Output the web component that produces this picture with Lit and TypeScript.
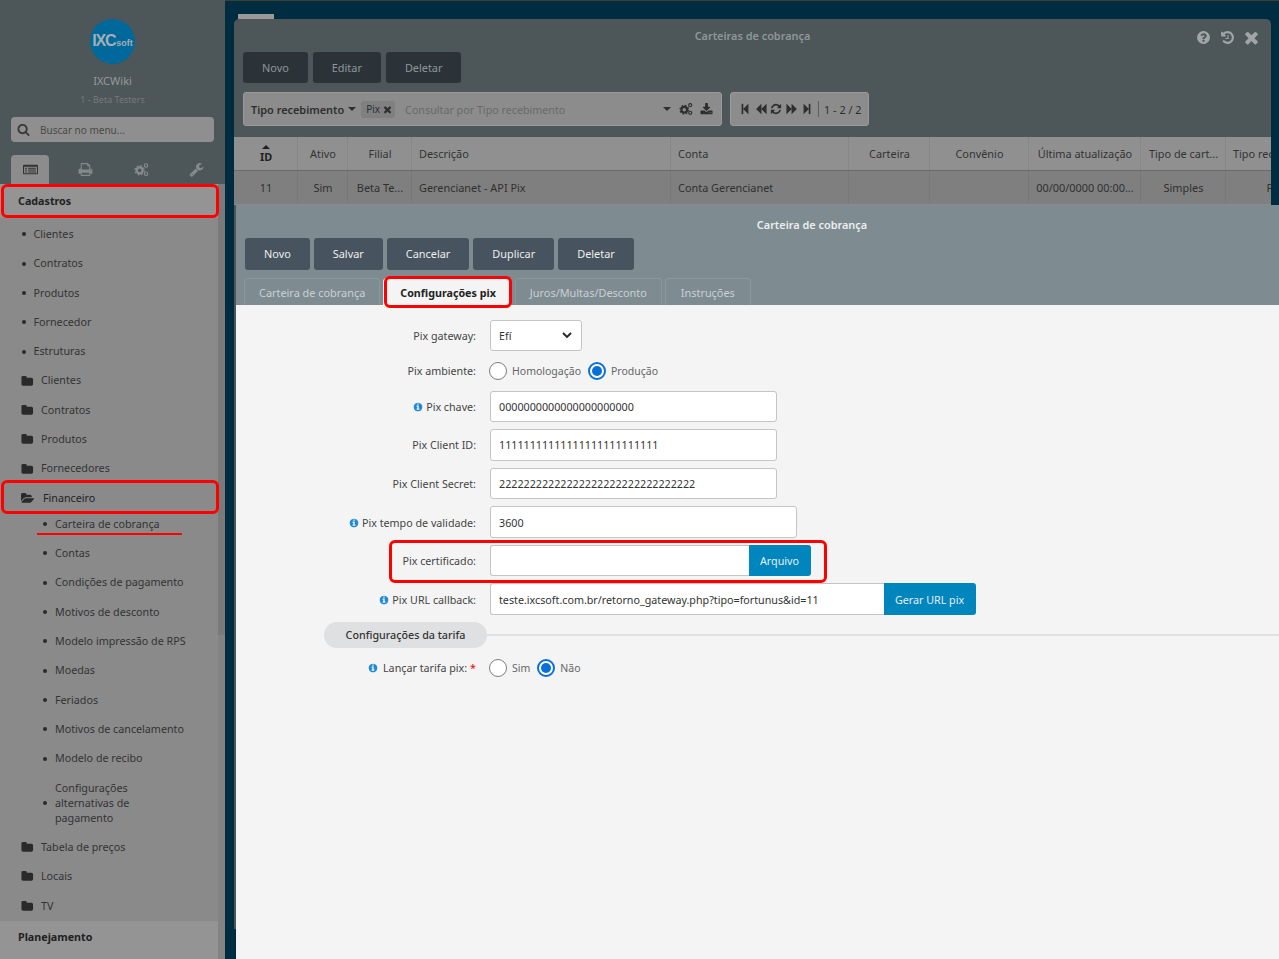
import { LitElement, html, css } from "lit";
import { customElement } from "lit/decorators.js";

const P: Record<string, string> = {
  search: "M1216 832q0-185-131.5-316.5t-316.5-131.5-316.5 131.5-131.5 316.5 131.5 316.5 316.5 131.5 316.5-131.5 131.5-316.5zm512 832q0 52-38 90t-90 38q-54 0-90-38l-343-342q-179 124-399 124-143 0-273.5-55.5t-225-150-150-225-55.5-273.5 55.5-273.5 150-225 225-150 273.5-55.5 273.5 55.5 225 150 150 225 55.5 273.5q0 220-124 399l343 343q37 37 37 90z",
  folder: "M1728 608v704q0 92-66 158t-158 66h-1216q-92 0-158-66t-66-158v-960q0-92 66-158t158-66h320q92 0 158 66t66 158v32h672q92 0 158 66t66 158z",
  open: "M1879 952q0 31-31 66l-336 396q-43 51-120.5 86.5t-143.5 35.5h-1088q-34 0-60.5-13t-26.5-43q0-31 31-66l336-396q43-51 120.5-86.5t143.5-35.5h1088q34 0 60.5 13t26.5 43zm-343-344v160h-832q-94 0-197 47.5t-164 119.5l-337 396-5 6q0-4-.5-12.5t-.5-12.5v-960q0-92 66-158t158-66h320q92 0 158 66t66 158v32h544q92 0 158 66t66 158z",
  times: "M1490 1322q0 40-28 68l-136 136q-28 28-68 28t-68-28l-294-294-294 294q-28 28-68 28t-68-28l-136-136q-28-28-28-68t28-68l294-294-294-294q-28-28-28-68t28-68l136-136q28-28 68-28t68 28l294 294 294-294q28-28 68-28t68 28l136 136q28 28 28 68t-28 68l-294 294 294 294q28 28 28 68z",
  info: "M1152 1376v-160q0-14-9-23t-23-9h-96v-512q0-14-9-23t-23-9h-320q-14 0-23 9t-9 23v160q0 14 9 23t23 9h96v320h-96q-14 0-23 9t-9 23v160q0 14 9 23t23 9h448q14 0 23-9t9-23zm-128-896v-160q0-14-9-23t-23-9h-192q-14 0-23 9t-9 23v160q0 14 9 23t23 9h192q14 0 23-9t9-23zm640 416q0 209-103 385.5t-279.5 279.5-385.5 103-385.5-103-279.5-279.5-103-385.5 103-385.5 279.5-279.5 385.5-103 385.5 103 279.5 279.5 103 385.5z",
  question: "M1024 1376v-192q0-14-9-23t-23-9h-192q-14 0-23 9t-9 23v192q0 14 9 23t23 9h192q14 0 23-9t9-23zm256-672q0-88-55.5-163t-138.5-116-170-41q-243 0-371 213-15 24 8 42l132 100q7 6 19 6 16 0 25-12 53-68 86-92 34-24 86-24 48 0 85.5 26t37.5 59q0 38-20 61t-68 45q-63 28-115.5 86.5t-52.5 125.5v36q0 14 9 23t23 9h192q14 0 23-9t9-23q0-19 21.5-49.5t54.5-49.5q32-18 49-28.5t46-35 44.5-48 28-60.5 12.5-81zm384 192q0 209-103 385.5t-279.5 279.5-385.5 103-385.5-103-279.5-279.5-103-385.5 103-385.5 279.5-279.5 385.5-103 385.5 103 279.5 279.5 103 385.5z",
  history: "M1664 896q0 156-61 298t-164 245-245 164-298 61q-172 0-327-72.5t-264-204.5q-7-10-6.5-22.5t8.5-20.5l137-138q10-9 25-9 16 2 23 12 73 95 179 147t225 52q104 0 198.5-40.5t163.5-109.5 109.5-163.5 40.5-198.5-40.5-198.5-109.5-163.5-163.5-109.5-198.5-40.5q-98 0-188 35.5t-160 101.5l137 138q31 30 14 69-17 40-59 40h-448q-26 0-45-19t-19-45v-448q0-42 40-59 39-17 69 14l130 129q107-101 244.5-156.5t284.5-55.5q156 0 298 61t245 164 164 245 61 298zm-640-288v448q0 14-9 23t-23 9h-320q-14 0-23-9t-9-23v-64q0-14 9-23t23-9h224v-352q0-14 9-23t23-9h64q14 0 23 9t9 23z",
  first: "M1363 141q19-19 32-13t13 32v1472q0 26-13 32t-32-13l-710-710q-9-9-13-19v678q0 26-19 45t-45 19h-128q-26 0-45-19t-19-45v-1408q0-26 19-45t45-19h128q26 0 45 19t19 45v678q4-10 13-19z",
  back: "M1683 141q19-19 32-13t13 32v1472q0 26-13 32t-32-13l-710-710q-9-9-13-19v710q0 26-13 32t-32-13l-710-710q-19-19-19-45t19-45l710-710q19-19 32-13t13 32v710q4-10 13-19z",
  fwd: "M109 1651q-19 19-32 13t-13-32v-1472q0-26 13-32t32 13l710 710q9 9 13 19v-710q0-26 13-32t32 13l710 710q19 19 19 45t-19 45l-710 710q-19 19-32 13t-13-32v-710q-4 10-13 19z",
  last: "M429 1651q-19 19-32 13t-13-32v-1472q0-26 13-32t32 13l710 710q9 9 13 19v-678q0-26 19-45t45-19h128q26 0 45 19t19 45v1408q0 26-19 45t-45 19h-128q-26 0-45-19t-19-45v-678q-4 10-13 19z",
  refresh: "M1639 1056q0 5-1 7-64 268-268 434.5t-478 166.5q-146 0-282.5-55t-243.5-157l-129 129q-19 19-45 19t-45-19-19-45v-448q0-26 19-45t45-19h448q26 0 45 19t19 45-19 45l-137 137q71 66 161 102t187 36q134 0 250-65t186-179q11-17 53-117 8-23 30-23h192q13 0 22.5 9.5t9.5 22.5zm25-800v448q0 26-19 45t-45 19h-448q-26 0-45-19t-19-45 19-45l138-138q-148-137-349-137-134 0-250 65t-186 179q-11 17-53 117-8 23-30 23h-199q-13 0-22.5-9.5t-9.5-22.5v-7q65-268 270-434.5t480-166.5q146 0 284 55.5t245 156.5l130-129q19-19 45-19t45 19 19 45z",
  download: "M1344 1344q0-26-19-45t-45-19-45 19-19 45 19 45 45 19 45-19 19-45zm256 0q0-26-19-45t-45-19-45 19-19 45 19 45 45 19 45-19 19-45zm128-224v320q0 40-28 68t-68 28h-1472q-40 0-68-28t-28-68v-320q0-40 28-68t68-28h465l135 136q58 56 136 56t136-56l136-136h464q40 0 68 28t28 68zm-325-569q17 41-14 70l-448 448q-18 19-45 19t-45-19l-448-448q-31-29-14-70 17-39 59-39h256v-448q0-26 19-45t45-19h256q26 0 45 19t19 45v448h256q42 0 59 39z",
  wrench: "M448 1472q0-26-19-45t-45-19-45 19-19 45 19 45 45 19 45-19 19-45zm644-420l-682 682q-37 37-90 37-52 0-91-37l-106-108q-38-36-38-90 0-53 38-91l681-681q39 98 114.5 173.5t173.5 114.5zm634-435q0 39-23 106-47 134-164.5 217.5t-258.5 83.5q-185 0-316.5-131.5t-131.5-316.5 131.5-316.5 316.5-131.5q58 0 121.5 16.5t107.5 46.5q16 11 16 28t-16 28l-293 169v224l193 107q5-3 79-48.5t135.5-81 70.5-35.5q15 0 23.5 10t8.5 25z",
  print: "M448 1536h896v-256h-896v256zm0-640h896v-384h-160q-40 0-68-28t-28-68v-160h-640v640zm1152 64q0-26-19-45t-45-19-45 19-19 45 19 45 45 19 45-19 19-45zm128 0v416q0 13-9.5 22.5t-22.5 9.5h-224v160q0 40-28 68t-68 28h-960q-40 0-68-28t-28-68v-160h-224q-13 0-22.5-9.5t-9.5-22.5v-416q0-79 56.5-135.5t135.5-56.5h64v-544q0-40 28-68t68-28h672q40 0 88 20t76 48l152 152q28 28 48 76t20 88v256h64q79 0 135.5 56.5t56.5 135.5z",
  listalt: "M128 320h1536q53 0 90.500 37.500t37.500 90.500v896q0 53-37.500 90.500t-90.500 37.500h-1536q-53 0-90.500-37.500t-37.500-90.500v-896q0-53 37.500-90.500t90.500-37.500zM128 576v768h1536v-768zM256 672h224v128h-224zM256 896h224v128h-224zM256 1120h224v128h-224zM608 672h928v128h-928zM608 896h928v128h-928zM608 1120h928v128h-928z",
};

const fa = (name: string, cls: string, w = 1792) =>
  html`<svg class="ic ${cls}" viewBox="0 0 ${w} 1792" fill="currentColor" fill-rule="evenodd"><path d=${P[name]}></path></svg>`;

const cogs = (cls: string) => html`<svg class="ic ${cls}" viewBox="0 0 20 20" fill="none" stroke="currentColor">
  <circle cx="7.500" cy="11" r="4" stroke-width="3"></circle>
  <circle cx="7.500" cy="11" r="6" stroke-width="2" stroke-dasharray="2.400 2.310"></circle>
  <circle cx="16" cy="4.500" r="2.200" stroke-width="1.600"></circle>
  <circle cx="16" cy="15.500" r="2.200" stroke-width="1.600"></circle>
</svg>`;

type Item = { t: string; k: "dot" | "folder" };
const TOP: Item[] = [
  { t: "Clientes", k: "dot" }, { t: "Contratos", k: "dot" }, { t: "Produtos", k: "dot" },
  { t: "Fornecedor", k: "dot" }, { t: "Estruturas", k: "dot" }, { t: "Clientes", k: "folder" },
  { t: "Contratos", k: "folder" }, { t: "Produtos", k: "folder" }, { t: "Fornecedores", k: "folder" },
];
const SUB = ["Carteira de cobrança", "Contas", "Condições de pagamento", "Motivos de desconto", "Modelo impressão de RPS", "Moedas", "Feriados", "Motivos de cancelamento", "Modelo de recibo"];
const AFTER = ["Tabela de preços", "Locais", "TV"];

const HEAD = [
  ["Ativo", "c"], ["Filial", "c"], ["Descrição", "l"], ["Conta", "l"], ["Carteira", "c"], ["Convênio", "c"], ["Última atualização", "c"], ["Tipo de cart...", "c"], ["Tipo recebimento", "l"],
];
const ROW = [
  ["11", "c"], ["Sim", "c"], ["Beta Te...", "c"], ["Gerencianet - API Pix", "l"], ["Conta Gerencianet", "l"], ["", "c"], ["", "c"], ["00/00/0000 00:00...", "c"], ["Simples", "c"], ["Pix", "c"],
];

@customElement("app-root")
export class AppRoot extends LitElement {
  static styles = css`
    :host { display: block; position: relative; width: 1279px; height: 959px; overflow: hidden; background: #002c42; font-family: "Noto Sans", "Open Sans", sans-serif; font-size: 10.720px; color: #333; }
    * { box-sizing: border-box; }
    .ic { display: block; flex: none; }
    .topline { position: absolute; left: 0; top: 0; width: 100%; height: 1px; background: #3c3f36; }

    /* sidebar */
    .side { position: absolute; left: 0; top: 0; width: 225px; height: 959px; background: #4d5659; display: flex; flex-direction: column; }
    .brand { height: 117px; padding-top: 19px; display: flex; flex-direction: column; align-items: center; }
    .logo { width: 45px; height: 45px; border-radius: 50%; background: #00689a; color: #a3afb5; display: flex; align-items: baseline; justify-content: center; padding-top: 13px; font-family: "Liberation Sans", sans-serif; font-weight: 700; line-height: 18px; }
    .logo b { font-size: 16px; letter-spacing: -1.200px; }
    .logo span { font-size: 9px; margin-left: 1px; }
    .bname { margin-top: 9px; line-height: 16px; color: #949b9e; font-size: 11px; }
    .bsub { margin-top: 4px; line-height: 14px; color: #737b7e; font-size: 9px; }
    .searchbox { margin: 0 11px; height: 25px; width: 203px; flex: none; background: #8f8f8f; border-radius: 4px; display: flex; align-items: center; padding-left: 6px; gap: 10px; color: #4a4a4a; font-size: 10px; }
    .s13 { width: 13px; height: 13px; color: #3a3a3a; }
    .tabs { margin-top: 13px; height: 29px; padding-left: 11px; display: flex; flex: none; color: #858a8c; }
    .tab { width: 38px; flex: none; margin-right: 17.500px; display: flex; align-items: center; justify-content: center; border-radius: 4px 4px 0 0; }
    .tab.on { background: #8c8c8c; color: #333; }
    .s15 { width: 15px; height: 15px; }
    .mwrap { flex: 1; display: flex; min-height: 0; background: #8a8a8a; }
    .menu { width: 218px; display: flex; flex-direction: column; }
    .track { width: 7px; background: #838383; }
    .thumb { height: 451px; background: #7a7a7a; }
    .hd { height: 34px; flex: none; padding: 0 0 0 18px; display: flex; align-items: center; background: #949494; font-weight: 700; color: #222; }
    .hd.fill { flex: 1; align-items: flex-start; padding-top: 9.500px; line-height: 15px; }
    .hd + .it { margin-top: 1.700px; }
    .it { height: 29.330px; flex: none; display: flex; align-items: center; color: #333; line-height: 15px; }
    .it.dot { padding-left: 22px; }
    .it.folder { padding-left: 21px; }
    .it.sub { padding-left: 43px; }
    .it.tall { height: 59.330px; }
    .bul { width: 4px; height: 4px; border-radius: 50%; background: #2a2a2a; margin-right: 7.500px; flex: none; }
    .it.sub .bul { margin-right: 8px; }
    .s12 { width: 12.500px; height: 12.500px; color: #2a2a2a; margin-right: 7.500px; }
    .fin { color: #222; }
    .s14o { width: 13.500px; height: 12.500px; color: #2a2a2a; margin-right: 8.500px; }
    .sublist { margin-top: -3.500px; display: flex; flex-direction: column; }
    .it.tall span:last-child { width: 100px; }

    /* windows */
    .pre-tab { position: absolute; left: 238px; top: 14px; width: 36px; height: 5px; background: #999; }
    .win1 { position: absolute; left: 234px; top: 19px; width: 1037px; height: 910px; background: #4d5659; border-radius: 5px 5px 0 0; overflow: hidden; font-size: 10.900px; }
    .t1 { height: 33px; padding-top: 9px; line-height: 16px; text-align: center; color: #8f9699; font-weight: 600; position: relative; }
    .wctl { position: absolute; right: 11px; top: 9px; display: flex; align-items: center; gap: 9px; color: #a0a5a7; }
    .s14 { width: 15px; height: 15px; }
    .s16 { width: 19px; height: 19px; margin-left: -2px; margin-right: -1px; }
    .bar { display: flex; gap: 5px; padding-left: 9px; }
    .btn { height: 31px; display: flex; align-items: center; border-radius: 3px; background: #2b3339; color: #8f9699; padding: 0 19px; }
    .filters { display: flex; gap: 8px; margin: 9px 0 0 9px; height: 34px; }
    .fbar { width: 479px; background: #8c8c8c; border: 1px solid #9a9a9a; border-radius: 3px; display: flex; align-items: center; padding-left: 7px; color: #2e2e2e; }
    .fname { font-weight: 600; letter-spacing: 0; }
    .car { width: 0; height: 0; border: 4px solid transparent; border-top: 4px solid #2e2e2e; border-bottom: 0; flex: none; }
    .fbar > .car { margin-left: 4px; }
    .chip { margin-left: 5px; height: 17px; padding: 0 2px 0 5px; border-radius: 3px; background: #808080; display: flex; align-items: center; gap: 2px; font-size: 10px; }
    .s10 { width: 11px; height: 11px; }
    .ph { margin-left: 10px; padding-top: 1px; flex: 1; color: #696969; font-size: 10.720px; }
    .fbar .tailc { margin-right: 8px; }
    .s13c { width: 14px; height: 14px; margin-right: 7px; color: #2e2e2e; }
    .s13d { width: 13px; height: 13px; margin-right: 8px; color: #2e2e2e; }
    .pager { width: 139px; background: #8c8c8c; border: 1px solid #9a9a9a; border-radius: 3px; display: flex; align-items: center; padding-left: 8px; gap: 3.500px; color: #2e2e2e; }
    .s12p { width: 12px; height: 12px; }
    .pager i { display: block; width: 1px; height: 16px; background: #5e5e5e; margin: 0 2px 0 1px; }
    .grid { display: grid; grid-template-columns: 64px 50px 64px 259px 178px 81px 99px 112px 85px 96px; }
    .thead { margin-top: 11px; height: 34px; background: #909090; border-bottom: 1px solid #6a6a6a; color: #333; }
    .tbody { height: 34px; background: #7f7f7f; border-bottom: 1px solid #8b8b8b; color: #303030; }
    .cell { border-right: 1px solid #878787; display: flex; align-items: center; white-space: nowrap; overflow: hidden; }
    .tbody .cell { border-right-color: #787878; }
    .cell.c { justify-content: center; padding-left: 1px; }
    .cell.l { padding-left: 7px; }
    .idc { flex-direction: column; justify-content: center; font-weight: 700; line-height: 13px; color: #222; }
    .sort { width: 0; height: 0; border: 4px solid transparent; border-bottom: 4px solid #222; border-top: 0; margin-bottom: 1px; }

    .win2 { position: absolute; left: 236px; top: 205px; width: 1152px; height: 754px; display: flex; flex-direction: column; background: #f4f4f4; }
    .w2head { height: 100px; flex: none; background: #7e8b91; font-size: 10.900px; }
    .t2 { height: 33px; padding-top: 12px; line-height: 16px; text-align: center; color: #eceeef; font-weight: 600; }
    .w2head .bar { gap: 4px; padding-left: 9px; }
    .w2head .btn { background: #47535e; color: #eceeef; height: 32px; padding: 0 19px 1px; }
    .tabsrow { display: flex; gap: 3px; padding-left: 8px; margin-top: 8px; height: 27px; }
    .ttab { border: 1px solid #8c989e; border-bottom: 0; border-radius: 4px 4px 0 0; padding: 0 14px; display: flex; align-items: center; color: #c9d0d3; }
    .ttab.on { background: #f4f4f4; color: #222; font-weight: 700; border-color: #f4f4f4; padding: 1px 14px 0 16px; font-size: 10.720px; }
    .ttab:nth-child(3) { margin-left: 1px; padding: 0 14px; }
    .ttab:nth-child(4) { padding: 0 15px; }
    .form { padding-top: 15px; display: flex; flex-direction: column; }
    .row { display: flex; align-items: center; margin-top: 7px; }
    .row:first-child { margin-top: 0; }
    .row.r20 { height: 20px; margin-top: 10px; }
    .row.r20 .rlab, .row.r20 .lab { padding-bottom: 1px; }
    .row.a10 { margin-top: 10px; }
    .row.up .lab, .row.up .inp { padding-bottom: 1px; }
    .row.dn .lab, .row.dn .inp, .row.dn .addon { padding-top: 1px; }
    .lab { width: 240px; flex: none; padding-right: 0; display: flex; justify-content: flex-end; align-items: center; gap: 3px; color: #444; }
    .info { width: 10px; height: 10px; color: #1c8ad6; }
    .info.wide { margin-right: 2px; }
    .req { color: #e00; margin-left: 0; }
    .ctl { margin-left: 14px; display: flex; align-items: center; }
    .inp { height: 31px; background: #fff; border: 1px solid #c4c4c4; border-radius: 3px; display: flex; align-items: center; padding-left: 8px; color: #333; white-space: nowrap; }
    .h32 { height: 32px; }
    .w92 { width: 92px; justify-content: space-between; padding-right: 9px; }
    .w287 { width: 287px; }
    .w307 { width: 307px; }
    .w259 { width: 259px; border-radius: 3px 0 0 3px; border-right: 0; }
    .w394 { width: 394px; border-radius: 3px 0 0 3px; border-right: 0; }
    .addon { background: #0085bd; color: #e4f0f6; border-radius: 0 3px 3px 0; height: 100%; display: flex; align-items: center; justify-content: center; }
    .a62 { width: 62px; height: 31px; padding-right: 1px; }
    .a92 { width: 92px; height: 32px; padding-right: 1px; }
    .rad { width: 18px; height: 18px; margin-left: -1px; border-radius: 50%; border: 1px solid #7d7d7d; background: #fff; flex: none; display: flex; align-items: center; justify-content: center; }
    .rad.on { border: 2px solid #0a6fd8; }
    .rad.on::after { content: ""; width: 10px; height: 10px; border-radius: 50%; background: #0a6fd8; }
    .rlab { margin: 0 8px 0 5px; color: #666; font-size: 10.500px; }
    .sect { height: 26px; display: flex; align-items: center; margin-top: 7px; padding-left: 88px; }
    .pill { width: 163px; height: 26px; flex: none; background: #dfe0e2; border-radius: 13px; display: flex; align-items: center; justify-content: center; color: #333; font-weight: 500; }
    .sline { flex: 1; height: 2px; background: #dfe0e2; }

    .mark { position: absolute; border: 3px solid #f00; border-radius: 6px; pointer-events: none; }
    .m1 { left: 1px; top: 184px; width: 218px; height: 34px; }
    .m2 { left: 1px; top: 480px; width: 218px; height: 34px; }
    .m3 { left: 384px; top: 276px; width: 128px; height: 32px; }
    .m4 { left: 389px; top: 540px; width: 438px; height: 43px; }
    .ul { position: absolute; left: 37px; top: 533px; width: 145px; height: 2px; background: #f00; }
  `;

  private sidebar() {
    return html`<aside class="side">
      <div class="brand">
        <div class="logo"><b>IXC</b><span>soft</span></div>
        <div class="bname">IXCWiki</div>
        <div class="bsub">1 - Beta Testers</div>
      </div>
      <div class="searchbox">${fa("search", "s13")}<span>Buscar no menu...</span></div>
      <div class="tabs">
        <div class="tab on">${fa("listalt", "s15")}</div>
        <div class="tab">${fa("print", "s15")}</div>
        <div class="tab">${cogs("s15")}</div>
        <div class="tab">${fa("wrench", "s15")}</div>
      </div>
      <div class="mwrap">
        <nav class="menu">
          <div class="hd">Cadastros</div>
          ${TOP.map((i) => html`<div class="it ${i.k}">
            ${i.k === "dot" ? html`<span class="bul"></span>` : fa("folder", "s12")}<span>${i.t}</span>
          </div>`)}
          <div class="it folder fin">${fa("open", "s14o", 1920)}<span>Financeiro</span></div>
          <div class="sublist">
            ${SUB.map((t) => html`<div class="it sub"><span class="bul"></span><span>${t}</span></div>`)}
            <div class="it sub tall"><span class="bul"></span><span>Configurações alternativas de pagamento</span></div>
          </div>
          ${AFTER.map((t) => html`<div class="it folder">${fa("folder", "s12")}<span>${t}</span></div>`)}
          <div class="hd fill">Planejamento</div>
        </nav>
        <div class="track"><div class="thumb"></div></div>
      </div>
    </aside>`;
  }

  private listWindow() {
    return html`<section class="win1">
      <div class="t1">Carteiras de cobrança
        <div class="wctl">${fa("question", "s14")}${fa("history", "s14")}${fa("times", "s16")}</div>
      </div>
      <div class="bar">
        <div class="btn">Novo</div><div class="btn">Editar</div><div class="btn">Deletar</div>
      </div>
      <div class="filters">
        <div class="fbar">
          <span class="fname">Tipo recebimento</span><span class="car"></span>
          <span class="chip">Pix ${fa("times", "s10")}</span>
          <span class="ph">Consultar por Tipo recebimento</span>
          <span class="car tailc"></span>${cogs("s13c")}${fa("download", "s13d")}
        </div>
        <div class="pager">
          ${fa("first", "s12p")}${fa("back", "s12p")}${fa("refresh", "s12p")}${fa("fwd", "s12p")}${fa("last", "s12p")}
          <i></i><span>1 - 2 / 2</span>
        </div>
      </div>
      <div class="grid thead">
        <div class="cell c idc"><span class="sort"></span>ID</div>
        ${HEAD.map(([t, a]) => html`<div class="cell ${a}">${t}</div>`)}
      </div>
      <div class="grid tbody">
        ${ROW.map(([t, a]) => html`<div class="cell ${a}">${t}</div>`)}
      </div>
    </section>`;
  }

  private formWindow() {
    const text = (label: unknown, val: string, cls: string, row = "") => html`<div class="row ${row}">
      <div class="lab">${label}</div><div class="ctl"><div class="inp ${cls}">${val}</div></div>
    </div>`;
    const inf = (t: string) => html`${fa("info", "info")}<span>${t}</span>`;
    return html`<section class="win2">
      <div class="w2head">
        <div class="t2">Carteira de cobrança</div>
        <div class="bar">
          <div class="btn">Novo</div><div class="btn">Salvar</div><div class="btn">Cancelar</div><div class="btn">Duplicar</div><div class="btn">Deletar</div>
        </div>
        <div class="tabsrow">
          <div class="ttab">Carteira de cobrança</div>
          <div class="ttab on">Configurações pix</div>
          <div class="ttab">Juros/Multas/Desconto</div>
          <div class="ttab">Instruções</div>
        </div>
      </div>
      <div class="form">
        <div class="row">
          <div class="lab">Pix gateway:</div>
          <div class="ctl"><div class="inp w92">Efí
            <svg class="ic" width="10" height="7" viewBox="0 0 10 7" fill="none" stroke="#222" stroke-width="1.800"><path d="M1 1l4 4 4-4"></path></svg>
          </div></div>
        </div>
        <div class="row r20">
          <div class="lab">Pix ambiente:</div>
          <div class="ctl"><span class="rad"></span><span class="rlab">Homologação</span><span class="rad on"></span><span class="rlab">Produção</span></div>
        </div>
        <div class="row a10"><div class="lab">${inf("Pix chave:")}</div><div class="ctl"><div class="inp w287">0000000000000000000000</div></div></div>
        ${text("Pix Client ID:", "11111111111111111111111111", "w287 h32", "up")}
        ${text("Pix Client Secret:", "22222222222222222222222222222222", "w287")}
        ${text(inf("Pix tempo de validade:"), "3600", "w307 h32", "dn")}
        <div class="row">
          <div class="lab">Pix certificado:</div>
          <div class="ctl"><div class="inp w259"></div><div class="addon a62">Arquivo</div></div>
        </div>
        <div class="row dn">
          <div class="lab">${inf("Pix URL callback:")}</div>
          <div class="ctl"><div class="inp w394 h32">teste.ixcsoft.com.br/retorno_gateway.php?tipo=fortunus&id=11</div><div class="addon a92">Gerar URL pix</div></div>
        </div>
        <div class="sect"><div class="pill">Configurações da tarifa</div><div class="sline"></div></div>
        <div class="row r20">
          <div class="lab">${fa("info", "info wide")}<span>Lançar tarifa pix:</span><span class="req">*</span></div>
          <div class="ctl"><span class="rad"></span><span class="rlab">Sim</span><span class="rad on"></span><span class="rlab">Não</span></div>
        </div>
      </div>
    </section>`;
  }

  render() {
    return html`
      <div class="topline"></div>
      ${this.sidebar()}
      <div class="pre-tab"></div>
      ${this.listWindow()}
      ${this.formWindow()}
      <div class="mark m1"></div>
      <div class="mark m2"></div>
      <div class="ul"></div>
      <div class="mark m3"></div>
      <div class="mark m4"></div>
    `;
  }
}
